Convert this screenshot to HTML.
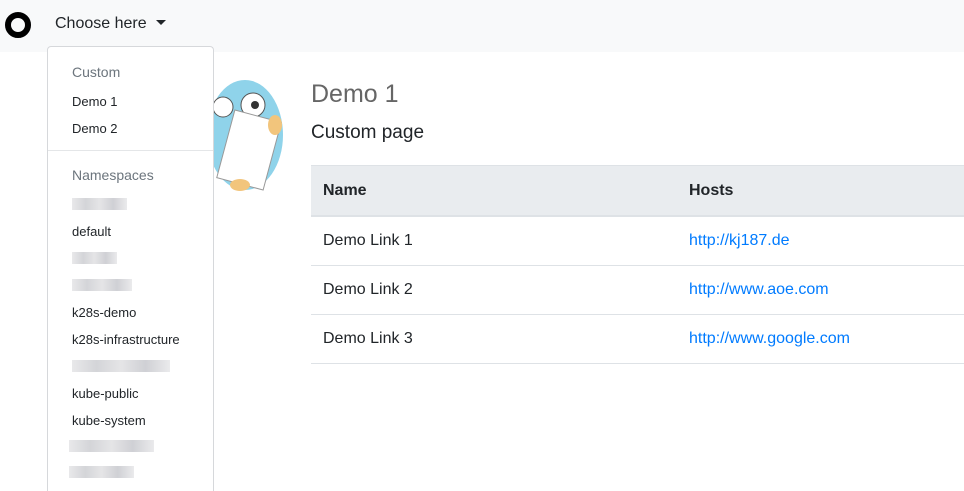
<!DOCTYPE html>
<html><head><style>
html,body{margin:0;width:964px;height:491px;overflow:hidden}
body{font-family:"Liberation Sans",sans-serif;background:#fff;color:#212529;position:relative}
.nav{position:absolute;left:0;top:0;width:964px;height:52px;background:#f8f9fa}
.logo{position:absolute;left:5px;top:12px;width:14px;height:14px;border:6px solid #000;border-radius:50%}
.choose{position:absolute;left:55px;top:15px;font-size:16px;color:#212529}
.caret{display:inline-block;margin-left:9px;vertical-align:3px;border-left:5px solid transparent;border-right:5px solid transparent;border-top:5px solid #212529}
.dd{position:absolute;left:47px;top:46px;width:165px;height:450px;background:#fff;border:1px solid #d6d8db;border-bottom:none;border-radius:4px 4px 0 0}
.it{position:absolute;left:24px;font-size:13px;color:#212529}
.hd{position:absolute;left:24px;font-size:14px;color:#6c757d}
.blur{position:absolute;height:12px;background:linear-gradient(90deg,#e6e6e8,#cfd0d4,#e2e2e4,#cacbd0,#e8e8ea);opacity:.9}
h1{position:absolute;left:311px;top:80px;margin:0;font-size:25px;font-weight:400;color:#666}
h2{position:absolute;left:311px;top:122px;margin:0;font-size:19px;font-weight:400}
table{position:absolute;left:311px;top:165px;width:653px;border-collapse:collapse;font-size:16px}
th{background:#e9ecef;text-align:left;height:49px;padding:0 12px;border-bottom:2px solid #dee2e6;border-top:1px solid #dee2e6}
td{height:48px;padding:0 12px;border-bottom:1px solid #dee2e6}
a{color:#007bff;text-decoration:none}
</style></head><body>
<div class="nav"><div class="logo"></div><div class="choose">Choose here<span class="caret"></span></div></div>
<svg style="position:absolute;left:205px;top:75px" width="90" height="125">
<ellipse cx="40" cy="60" rx="38" ry="55" fill="#8fd3ea"/>
<circle cx="48" cy="30" r="12" fill="#fff" stroke="#555"/><circle cx="50" cy="30" r="4" fill="#333"/>
<circle cx="18" cy="32" r="10" fill="#fff" stroke="#555"/>
<rect x="20" y="40" width="48" height="70" fill="#fff" stroke="#999" transform="rotate(15 44 75)"/>
<ellipse cx="70" cy="50" rx="7" ry="10" fill="#f2c57c"/><ellipse cx="35" cy="110" rx="10" ry="6" fill="#f2c57c"/>
</svg>
<div class="dd">
<div class="hd" style="top:17px">Custom</div>
<div class="it" style="top:47px">Demo 1</div>
<div class="it" style="top:74px">Demo 2</div>
<div style="position:absolute;left:0;right:0;top:103px;border-top:1px solid #e4e6e8"></div>
<div class="hd" style="top:120px">Namespaces</div>
<div class="blur" style="left:24px;top:151px;width:55px"></div>
<div class="it" style="top:177px">default</div>
<div class="blur" style="left:24px;top:205px;width:45px"></div>
<div class="blur" style="left:24px;top:232px;width:60px"></div>
<div class="it" style="top:258px">k28s-demo</div>
<div class="it" style="top:285px">k28s-infrastructure</div>
<div class="blur" style="left:24px;top:313px;width:98px"></div>
<div class="it" style="top:339px">kube-public</div>
<div class="it" style="top:366px">kube-system</div>
<div class="blur" style="left:21px;top:393px;width:85px"></div>
<div class="blur" style="left:21px;top:419px;width:65px"></div>
</div>
<h1>Demo 1</h1>
<h2>Custom page</h2>
<table>
<tr><th style="width:342px">Name</th><th>Hosts</th></tr>
<tr><td>Demo Link 1</td><td><a>http://kj187.de</a></td></tr>
<tr><td>Demo Link 2</td><td><a>http://www.aoe.com</a></td></tr>
<tr><td>Demo Link 3</td><td><a>http://www.google.com</a></td></tr>
</table>
</body></html>
